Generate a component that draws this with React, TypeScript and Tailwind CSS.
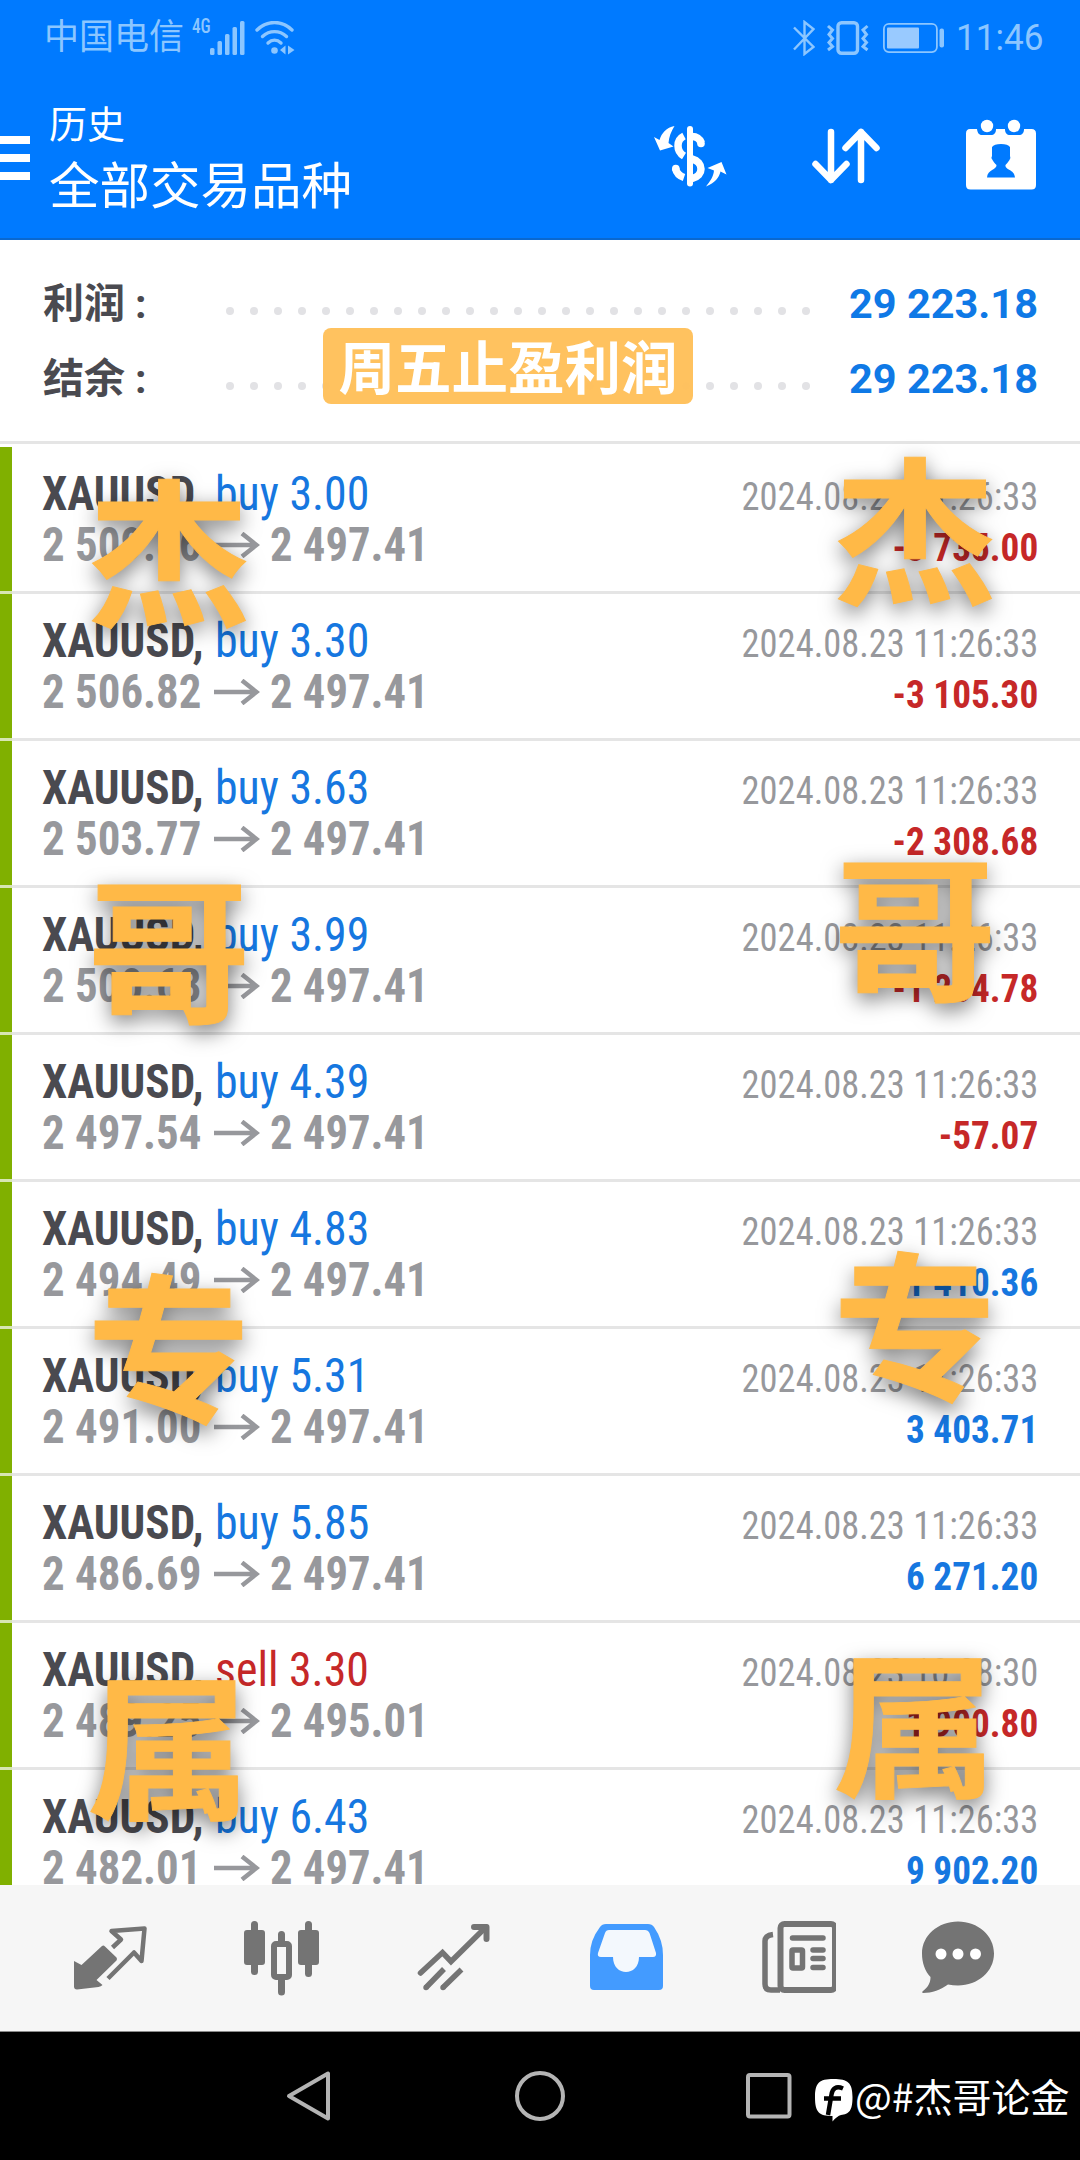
import type { ReactNode } from "react";

type Deal = {
  side: "buy" | "sell";
  volume: string;
  open: string;
  close: string;
  time: string;
  profit: string;
};

const deals: Deal[] = [
  { side: "buy", volume: "3.00", open: "2 509.86", close: "2 497.41", time: "2024.08.23 11:26:33", profit: "-3 735.00" },
  { side: "buy", volume: "3.30", open: "2 506.82", close: "2 497.41", time: "2024.08.23 11:26:33", profit: "-3 105.30" },
  { side: "buy", volume: "3.63", open: "2 503.77", close: "2 497.41", time: "2024.08.23 11:26:33", profit: "-2 308.68" },
  { side: "buy", volume: "3.99", open: "2 500.63", close: "2 497.41", time: "2024.08.23 11:26:33", profit: "-1 284.78" },
  { side: "buy", volume: "4.39", open: "2 497.54", close: "2 497.41", time: "2024.08.23 11:26:33", profit: "-57.07" },
  { side: "buy", volume: "4.83", open: "2 494.49", close: "2 497.41", time: "2024.08.23 11:26:33", profit: "1 410.36" },
  { side: "buy", volume: "5.31", open: "2 491.00", close: "2 497.41", time: "2024.08.23 11:26:33", profit: "3 403.71" },
  { side: "buy", volume: "5.85", open: "2 486.69", close: "2 497.41", time: "2024.08.23 11:26:33", profit: "6 271.20" },
  { side: "sell", volume: "3.30", open: "2 489.25", close: "2 495.01", time: "2024.08.23 10:28:30", profit: "-1 900.80" },
  { side: "buy", volume: "6.43", open: "2 482.01", close: "2 497.41", time: "2024.08.23 11:26:33", profit: "9 902.20" },
];

function StatusBar() {
  return (
    <div className="flex h-[76px] items-center pl-[44px] pr-[36px] text-[#8cc6ff]">
      <span className="w-[141px] text-[35px] leading-[78px] whitespace-nowrap">中国电信</span>
      <span className="ml-[7px] -mt-[22px] font-['Roboto_Condensed','Roboto'] text-[21px] font-medium font-stretch-condensed">
        <span className="inline-block w-[18px] origin-left scale-x-[0.82]">4G</span>
      </span>
      <svg className="h-[34px] w-[36px]" viewBox="0 0 36 34" fill="currentColor">
        <rect x="0" y="27" width="4.5" height="7" rx="1.5" />
        <rect x="7.5" y="20" width="4.5" height="14" rx="1.5" />
        <rect x="15" y="13" width="4.5" height="21" rx="1.5" />
        <rect x="22.5" y="6" width="4.5" height="28" rx="1.5" />
        <rect x="30" y="0" width="4.5" height="34" rx="1.5" />
      </svg>
      <svg className="ml-[9px] h-[34px] w-[40px]" viewBox="0 0 40 34" fill="none" stroke="currentColor" strokeWidth="3.4" strokeLinecap="round">
        <path d="M2 9C12-1 27-1 37 9" />
        <path d="M7.500 15.500c7-6.500 17-6.500 24 0" />
        <path d="M13 22c4-3.600 9-3.600 13 0" />
        <circle cx="19.500" cy="29.500" r="3.300" fill="currentColor" stroke="none" />
        <path d="M30.500 24.500v9l-5.500-4.500zM33 24.500v9l6.500-4.500z" fill="currentColor" stroke="none" />
      </svg>
      <div className="flex-1" />
      <svg className="h-[36px] w-[22px]" viewBox="0 0 22 36" fill="none" stroke="currentColor" strokeWidth="2.400">
        <path d="M1 7.500 20.500 27 11.500 34V2l9 7L1 29.500" />
      </svg>
      <svg className="ml-[11px] h-[34px] w-[44px]" viewBox="0 0 44 34" fill="none" stroke="currentColor">
        <rect x="12" y="1.700" width="19.500" height="30.600" rx="3.500" strokeWidth="3.400" />
        <path d="M2 5l4.500 4-3.500 4.500 3.500 4-3.500 4 3.500 4L2 29M41.500 5 37 9l3.500 4.500-3.500 4 3.500 4-3.500 4 4.500 3.500" strokeWidth="3" />
      </svg>
      <svg className="ml-[13px] h-[30px] w-[62px]" viewBox="0 0 62 30" fill="currentColor">
        <rect x="0.900" y="0.900" width="53" height="28.200" rx="5" fill="none" stroke="currentColor" strokeWidth="1.800" />
        <rect x="4" y="4.500" width="32" height="21" rx="1" fill="#99caff" />
        <rect x="56.500" y="5.500" width="4.500" height="19" rx="2" />
      </svg>
      <span className="ml-[11px] w-[88px] origin-left scale-x-[0.95] text-[37px] leading-[76px]">11:46</span>
    </div>
  );
}

function Header() {
  return (
    <header className="h-[240px] border-b-2 border-[#0a68cf] bg-[#007aff]">
      <StatusBar />
      <div className="flex text-white">
        <div className="mt-[60px] flex w-[30px] flex-col gap-[10px]">
          <div className="h-2 bg-white" />
          <div className="h-2 bg-white" />
          <div className="h-2 bg-white" />
        </div>
        <div className="ml-[19px] mt-[21px]">
          <div className="text-[38px] leading-[56px]">历史</div>
          <div className="mt-[2px] text-[50.500px] leading-[64px]">全部交易品种</div>
        </div>
        <div className="flex-1" />
        <svg className="mt-[42px] h-[76px] w-[76px]" viewBox="652 118 76 76" fill="none" stroke="#fff" strokeLinecap="round">
          <path d="M690 129V183.500" strokeWidth="6" />
          <path d="M684 136c-8 4-8 15 0 20M675.500 168.500c1 4.500 4 7.500 8.500 9M692 136.500c4.500 0 8 3 9.500 6.500M692 159c12 3 12 17 0 19.500" strokeWidth="7.500" strokeLinecap="butt" />
          <circle cx="701" cy="143.500" r="3.800" fill="#fff" stroke="none" />
          <circle cx="675.800" cy="168.500" r="3.800" fill="#fff" stroke="none" />
          <path d="M674.500 126c-8 1.500-13 7-15 14L654 137l6 13.500 13.500-4-5-3.500c.5-6 2.500-11.500 6-17ZM706 186.500c9-3.500 13-9 14.500-15l6 3-5-12.500-14 6 6.500 2.500c-.5 6-4 11-8 16Z" fill="#fff" stroke="none" />
        </svg>
        <svg className="ml-[80px] mt-[48px] h-[64px] w-[76px]" viewBox="808 124 76 64" fill="none" stroke="#fff" strokeWidth="6.500" strokeLinecap="round" strokeLinejoin="round">
          <path d="M831 132v48M815.500 164 831 180l15.500-16M861 180v-48M845.500 148 861 132l15.500 16" />
        </svg>
        <svg className="ml-[78px] mr-[42px] mt-[42px] h-[76px] w-[76px]" viewBox="962 118 76 76" fill="#fff">
          <path d="M970 129h7c.5 4.500 2.500 6 5 6h9c3 0 5-2 5-6h9c0 4 2 6 5 6h9c3 0 5-2 5-6h7.500q4.500 0 4.500 4.500V185q0 4.500-4.500 4.500H970.500q-4.500 0-4.500-4.500v-51.500q0-4.500 4-4.500Z" />
          <circle cx="987" cy="126" r="6.200" />
          <circle cx="1014" cy="126" r="6.200" />
          <path d="M992 147q2-3 9-3t9 3v9q1 2-.5 4-2 3-4 5c-1 5 9 4 9.500 12.500h-28c.5-8.500 10-7.500 9.500-12.500-2-2-3-3-4-5q-2-2-.5-4Z" fill="#007aff" />
        </svg>
      </div>
    </header>
  );
}

function SummaryRow({ label, value }: { label: string; value: string }) {
  return (
    <div className="flex h-[75px] items-center pl-[43px] pr-[42px]">
      <span className="mt-[7px] text-[41px] font-bold text-[#4a4a50]">{label}</span>
      <span className="ml-[10px] mt-[7px] w-[91px] text-[41px] font-bold text-[#4a4a50]">:</span>
      <span className="mt-[18px] flex gap-4">
        {Array.from({ length: 25 }, (_, i) => (
          <span key={i} className="h-2 w-2 rounded-full bg-[#e2e2e5]" />
        ))}
      </span>
      <span className="ml-auto mt-[5px] text-[41.500px] font-bold text-[#0f79e6]">{value}</span>
    </div>
  );
}

function DealRow({ deal }: { deal: Deal }) {
  const sideColor = deal.side === "buy" ? "text-[#1677e0]" : "text-[#c62828]";
  const profitColor = deal.profit.startsWith("-") ? "text-[#c62828]" : "text-[#1677e0]";

  return (
    <div className="flex h-[147px] shrink-0">
      <div className="w-3 border-b-3 border-[#d7e6b3] bg-[#80b000]" />
      <div className="flex flex-1 justify-between border-b-3 border-[#e5e5e5] pl-[30px] pr-[42px] font-['Roboto_Condensed','Roboto'] font-stretch-condensed whitespace-nowrap">
        <div className="pt-[21px] text-[48px] leading-[51px]">
          <div className="flex">
            <span className="w-[173px] origin-left scale-x-[0.94] font-bold text-[#4a4a50]">XAUUSD,</span>
            <span className={`origin-left scale-x-[0.955] ${sideColor}`}>
              {deal.side} {deal.volume}
            </span>
          </div>
          <div className="flex items-center font-bold text-[#97989c]">
            <span className="w-[172px] origin-left scale-x-[0.935]">{deal.open}</span>
            <svg className="h-[26px] w-[46px]" viewBox="0 0 46 26" fill="none" stroke="currentColor" strokeWidth="4.500">
              <path d="M0 13H43M28 1.500 42.500 13 28 24.500" />
            </svg>
            <span className="ml-[10px] origin-left scale-x-[0.93]">{deal.close}</span>
          </div>
        </div>
        <div className="pt-[25px] text-right text-[39px] leading-[51px]">
          <div className="origin-right scale-x-[0.935] text-[#97989c]">{deal.time}</div>
          <div className={`origin-right scale-x-[0.955] font-bold ${profitColor}`}>{deal.profit}</div>
        </div>
      </div>
    </div>
  );
}

function NavIcon({ x, className = "", children }: { x: number; className?: string; children: ReactNode }) {
  return (
    <svg className={`h-[80px] w-[76px] ${className}`} viewBox={`${x} 1918 76 80`} fill="none" stroke="#747474" strokeWidth="6">
      {children}
    </svg>
  );
}

function TabBar() {
  return (
    <nav className="flex h-[147px] shrink-0 gap-[96px] border-b border-[#8a8a8a] bg-[#f6f6f6] pl-[72px] pt-[33px]">
      <NavIcon x={72}>
        <path d="M102 1946q1.500-1 3 .5l11.500 11q1 1.500 0 3L96.500 1980l6 5q-1.500 1.500-4 2L77 1989.500q-3 0-3-3V1961l7.500 4Z" fill="#747474" stroke="none" />
        <path d="M112.500 1947.500 121 1939.500 111.500 1931 144.500 1928.500 141.500 1961 134 1952.500 108 1978.500" strokeWidth="4.500" strokeLinejoin="round" />
      </NavIcon>
      <NavIcon x={244}>
        <path d="M254.500 1924.500v47M281.500 1934.500v10M281.500 1979v13M308.500 1924.500v49" strokeWidth="7" strokeLinecap="round" />
        <path d="M247 1930h15q3 0 3 3v29q0 3-3 3h-15q-3 0-3-3v-29q0-3 3-3ZM301 1930h15q3 0 3 3v29q0 3-3 3h-15q-3 0-3-3v-29q0-3 3-3Z" fill="#747474" stroke="none" />
        <rect x="274" y="1944" width="15" height="33" rx="2" fill="#f6f6f6" />
      </NavIcon>
      <NavIcon x={416}>
        <path d="M420.500 1973 442.500 1952.500 451 1961.500 486 1927" strokeWidth="5.500" strokeLinecap="round" />
        <path d="M474 1927h12.500v12" strokeLinecap="round" strokeLinejoin="round" />
        <path d="M444 1969 426 1987.500M461.500 1969.500 443 1987.500" strokeWidth="5.500" />
        <circle cx="426" cy="1987.500" r="2.700" fill="#747474" stroke="none" />
        <circle cx="443" cy="1987.500" r="2.700" fill="#747474" stroke="none" />
      </NavIcon>
      <NavIcon x={588}>
        <path d="M606 1924h42q4 0 6 3 9 13 9 28v31q0 4-4 4h-65q-4 0-4-4v-31q0-15 10-28 2-3 6-3Z" fill="#439bff" stroke="none" />
        <path d="M609 1930h36q3 0 4.500 3l6.500 20q.5 4-3 4h-14c0 20-26 20-26 0h-12q-4 0-3-4l7-20q1-3 4-3Z" fill="#f3f8fd" stroke="none" />
      </NavIcon>
      <NavIcon x={760}>
        <rect x="780.500" y="1924" width="54.500" height="66" rx="4" strokeWidth="6" />
        <path d="M780 1990h-9q-6 0-6-6v-43q0-5.500 8-6.500" strokeWidth="5.500" />
        <path d="M792.500 1938h30.500M813 1950h10M813 1958.500h10M813 1967.500h10" strokeWidth="5.500" strokeLinecap="round" />
        <rect x="792" y="1950" width="10.500" height="18" rx="1" strokeWidth="5.500" />
      </NavIcon>
      <NavIcon x={920} className="-ml-3">
        <path d="M958 1921.500c20 0 36 14 36 32s-16 32-36 32q-5 0-10-1c-7 5-16 8.500-25 8.500-1 0-1-1.500 0-2 5-4 7.500-8 7.500-14-5.500-6-8.500-14-8.500-23.500 0-18 16-32 36-32Z" fill="#747474" stroke="none" />
        <g fill="#fff" stroke="none">
          <circle cx="941" cy="1954" r="5.500" />
          <circle cx="958" cy="1954" r="5.500" />
          <circle cx="975.500" cy="1954" r="5.500" />
        </g>
      </NavIcon>
    </nav>
  );
}

function SystemBar() {
  return (
    <div className="flex h-[128px] shrink-0 items-center bg-black pl-[286px]">
      <svg className="h-[52px] w-[46px]" viewBox="0 0 46 52" fill="none" stroke="#b4b4b4" strokeWidth="4" strokeLinejoin="round">
        <path d="M42 3.500v45L3 26Z" />
      </svg>
      <svg className="ml-[182px] h-[52px] w-[52px]" viewBox="0 0 52 52" fill="none" stroke="#b4b4b4" strokeWidth="4">
        <circle cx="26" cy="26" r="23" />
      </svg>
      <svg className="ml-[180px] h-[46px] w-[46px]" viewBox="0 0 46 46" fill="none" stroke="#b4b4b4" strokeWidth="4">
        <rect x="2" y="2" width="41.500" height="41.500" rx="2" />
      </svg>
      <svg className="ml-[23px] mt-[10px] h-[44px] w-[38px]" viewBox="0 0 38 44">
        <path d="M18.500 0C33 0 37.500 4 37.500 18S34 35 26 36q-4 1-8.500 6.500V37C4 37 0 33 0 18.500S4 0 18.500 0Z" fill="#fff" />
        <path d="M28 9.500c-7-3-10.500 0-11.500 6L13 36M9 19.500h17" fill="none" stroke="#000" strokeWidth="4.500" />
      </svg>
      <span className="ml-[2px] -mt-[2px] font-['Noto_Sans_CJK_SC',sans-serif] text-[39px] text-white whitespace-nowrap">@#杰哥论金</span>
    </div>
  );
}

function Watermark({ className }: { className: string }) {
  return (
    <div
      className={`absolute flex w-[164px] flex-col gap-[234px] text-center text-[164px] leading-[164px] font-bold text-[#ffb947] [-webkit-text-stroke:1px_#ffb947] [text-shadow:0_8px_22px_rgba(0,0,0,0.55)] ${className}`}
    >
      <span className="scale-y-96">杰</span>
      <span className="scale-y-94">哥</span>
      <span className="scale-y-97">专</span>
      <span className="scale-y-95">属</span>
    </div>
  );
}

export default function App() {
  return (
    <div className="relative flex h-[2160px] w-[1080px] flex-col overflow-hidden bg-white font-['Roboto','Noto_Sans_CJK_SC',sans-serif]">
      <Header />
      <section className="relative h-[204px] shrink-0 border-b-3 border-[#e5e5e5] pt-[24px]">
        <SummaryRow label="利润" value="29 223.18" />
        <SummaryRow label="结余" value="29 223.18" />
        <div className="absolute left-[323px] top-[88px] flex h-[76px] w-[370px] items-center justify-center rounded-lg bg-[#ffc05a]/97 pt-[9px] text-[56.500px] font-bold text-white">
          周五止盈利润
        </div>
      </section>
      <main className="flex min-h-0 flex-1 flex-col overflow-hidden pt-[3px]">
        {deals.map((deal, i) => (
          <DealRow key={i} deal={deal} />
        ))}
      </main>
      <TabBar />
      <SystemBar />
      <Watermark className="left-[87px] top-[478px]" />
      <Watermark className="left-[833px] top-[456px]" />
    </div>
  );
}
